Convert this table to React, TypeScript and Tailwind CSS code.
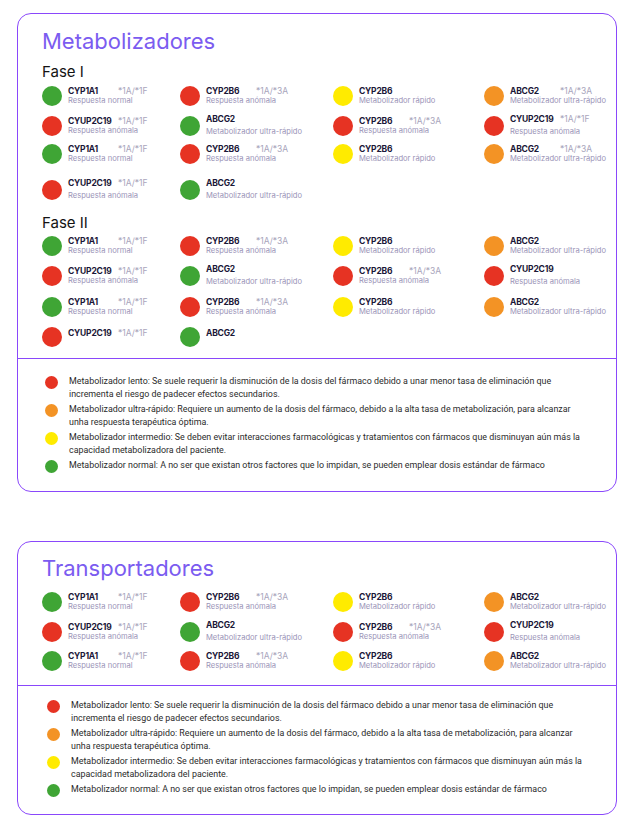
import React from "react";

type C = "g" | "r" | "y" | "o";
const BG: Record<C, string> = {
  g: "bg-[#3fa535]",
  r: "bg-[#e63323]",
  y: "bg-[#ffeb00]",
  o: "bg-[#f39325]",
};

type It = { c: C; n: string; a?: string; s?: string; l?: boolean; top?: boolean };

const N = "Respuesta normal";
const A = "Respuesta anómala";
const R = "Metabolizador rápido";
const U = "Metabolizador ultra-rápido";

function Item({ c, n, a, s, l, top }: It) {
  return (
    <div className="flex items-center">
      <span className={`block w-[20px] h-[20px] rounded-full shrink-0 ${BG[c]}`} />
      <div className={`ml-[6px] flex flex-col ${top ? "mb-[8px]" : ""}`}>
        <div className="flex items-center h-[9px] leading-[9px]">
          <span className="w-[50px] font-bold text-[8.5px] tracking-[-0.2px] text-[#1b1838] whitespace-nowrap">{n}</span>
          {a && <span className="text-[8.5px] text-[#a9a5bc] whitespace-nowrap">{a}</span>}
        </div>
        {s && (
          <div className={`text-[7.6px] leading-[9px] text-[#9b94b8] whitespace-nowrap ${l ? "mt-[3px]" : ""}`}>{s}</div>
        )}
      </div>
    </div>
  );
}

function Row({ items, mt }: { items: It[]; mt: string }) {
  return (
    <div className={`grid grid-cols-[138px_153px_151px_1fr] h-[20px] items-center ${mt}`}>
      {items.map((it, i) => (
        <Item key={i} {...it} />
      ))}
    </div>
  );
}

const row1: It[] = [
  { c: "g", n: "CYP1A1", a: "*1A/*1F", s: N },
  { c: "r", n: "CYP2B6", a: "*1A/*3A", s: A },
  { c: "y", n: "CYP2B6", s: R },
  { c: "o", n: "ABCG2", a: "*1A/*3A", s: U },
];
const row2: It[] = [
  { c: "r", n: "CYUP2C19", a: "*1A/*1F", s: A },
  { c: "g", n: "ABCG2", s: U, l: true },
  { c: "r", n: "CYP2B6", a: "*1A/*3A", s: A },
  { c: "r", n: "CYUP2C19", a: "*1A/*1F", s: A, l: true },
];
const row4: It[] = [
  { c: "r", n: "CYUP2C19", a: "*1A/*1F", s: A, l: true },
  { c: "g", n: "ABCG2", s: U, l: true },
];

const r1b: It[] = [
  { c: "g", n: "CYP1A1", a: "*1A/*1F", s: N },
  { c: "r", n: "CYP2B6", a: "*1A/*3A", s: A },
  { c: "y", n: "CYP2B6", s: R },
  { c: "o", n: "ABCG2", s: U },
];
const r2b: It[] = [
  { c: "r", n: "CYUP2C19", a: "*1A/*1F", s: A },
  { c: "g", n: "ABCG2", s: U, l: true },
  { c: "r", n: "CYP2B6", a: "*1A/*3A", s: A },
  { c: "r", n: "CYUP2C19", s: A, l: true },
];
const r4b: It[] = [
  { c: "r", n: "CYUP2C19", a: "*1A/*1F", top: true },
  { c: "g", n: "ABCG2", top: true },
];
const r3t: It[] = [
  { c: "g", n: "CYP1A1", a: "*1A/*1F", s: N },
  { c: "r", n: "CYP2B6", a: "*1A/*3A", s: A },
  { c: "y", n: "CYP2B6", s: R },
  { c: "o", n: "ABCG2", s: U },
];

function Legend({ shift }: { shift?: boolean }) {
  const items: { c: C; lines: string[] }[] = [
    {
      c: "r",
      lines: [
        "Metabolizador lento: Se suele requerir la disminución de la dosis del fármaco debido a unar menor tasa de eliminación que",
        "incrementa el riesgo de padecer efectos secundarios.",
      ],
    },
    {
      c: "o",
      lines: [
        "Metabolizador ultra-rápido: Requiere un aumento de la dosis del fármaco, debido a la alta tasa de metabolización, para alcanzar",
        "unha respuesta terapéutica óptima.",
      ],
    },
    {
      c: "y",
      lines: [
        "Metabolizador intermedio: Se deben evitar interacciones farmacológicas y tratamientos con fármacos que disminuyan aún más la",
        "capacidad metabolizadora del paciente.",
      ],
    },
    {
      c: "g",
      lines: [
        "Metabolizador normal: A no ser que existan otros factores que lo impidan, se pueden emplear dosis estándar de fármaco",
      ],
    },
  ];
  return (
    <div className={`flex flex-col gap-[3px] ${shift ? "pl-[29px]" : "pl-[26px]"}`}>
      {items.map((it, i) => (
        <div key={i} className="flex items-start">
          <span className={`block w-[13px] h-[13px] rounded-full shrink-0 mt-[1px] ${BG[it.c]}`} />
          <div className="ml-[11px] font-['Roboto',sans-serif] text-[8.9px] leading-[12.5px] text-[#2b2b2b]">
            {it.lines.map((ln, j) => (
              <div key={j} className="whitespace-nowrap">{ln}</div>
            ))}
          </div>
        </div>
      ))}
    </div>
  );
}

export default function App() {
  return (
    <div className="w-[636px] h-[825px] bg-white font-['Inter',sans-serif] overflow-hidden">
      {/* Card 1 */}
      <div className="ml-[17px] mt-[13px] w-[600px] border-[1.5px] border-[#8a48fb] rounded-[14px]">
        <div className="pl-[24px] pt-[14px]">
          <h1 className="text-[22px] leading-[26px] text-[#7b5cf0] font-normal">Metabolizadores</h1>
          <h2 className="mt-[9px] text-[15px] leading-[18px] text-[#141414] font-normal">Fase I</h2>
          <Row items={row1} mt="mt-[5px]" />
          <Row items={row2} mt="mt-[9px]" />
          <Row items={row1} mt="mt-[9px]" />
          <Row items={row4} mt="mt-[15px]" />
          <h2 className="mt-[15px] text-[15px] leading-[18px] text-[#141414] font-normal">Fase II</h2>
          <Row items={r1b} mt="mt-[4px]" />
          <Row items={r2b} mt="mt-[9px]" />
          <Row items={r1b} mt="mt-[12px]" />
          <Row items={r4b} mt="mt-[10px]" />
        </div>
        <div className="mt-[11px] border-t-[1.5px] border-[#8a48fb]" />
        <div className="pt-[16px] pb-[18px] pl-[1px]">
          <Legend />
        </div>
      </div>

      {/* Card 2 */}
      <div className="ml-[17px] mt-[49px] w-[600px] border-[1.5px] border-[#8a48fb] rounded-[14px]">
        <div className="pl-[24px] pt-[13px]">
          <h1 className="text-[22px] leading-[26px] text-[#7b5cf0] font-normal">Transportadores</h1>
          <Row items={r1b} mt="mt-[11px]" />
          <Row items={r2b} mt="mt-[9px]" />
          <Row items={r3t} mt="mt-[10px]" />
        </div>
        <div className="mt-[14px] border-t-[1.5px] border-[#8a48fb]" />
        <div className="pt-[13px] pb-[17px]">
          <Legend shift />
        </div>
      </div>
    </div>
  );
}
